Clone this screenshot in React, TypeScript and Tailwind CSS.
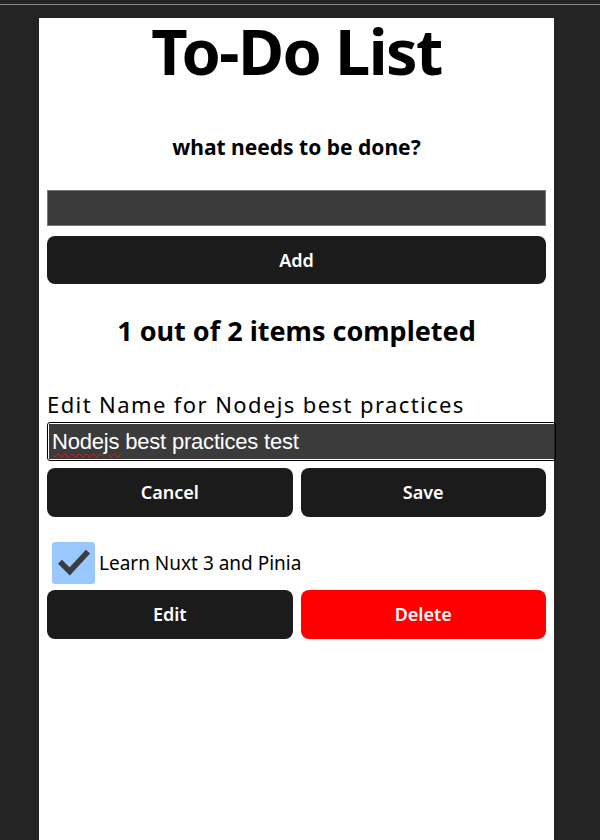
import { useState } from "react";

const font = { fontFamily: '"Noto Sans", sans-serif' };
const arial = { fontFamily: '"Liberation Sans", Arial, sans-serif' };

export default function App() {
  const [name, setName] = useState("Nodejs best practices test");

  return (
    <div className="min-h-[840px] bg-[#242424]" style={font}>
      <div className="h-[4px]" />
      <div className="h-px bg-[#8c8c8c]" />
      <div className="h-[13px]" />
      <div className="ml-[39px] w-[515px] min-h-[822px] bg-white px-2">
        <h1 className="text-center text-[63px] font-bold leading-[66px] tracking-tight text-black">
          To-Do List
        </h1>

        <h2 className="mt-[49px] text-center text-[21px] font-bold leading-[28px] text-black">
          what needs to be done?
        </h2>

        <input
          type="text"
          className="mt-[29px] block h-[36px] w-full border border-[#767676] bg-[#3b3b3b] px-1 text-white outline-none"
        />
        <button className="mt-[10px] h-[48px] w-full rounded-lg bg-[#1b1b1b] text-[18px] font-semibold text-white">
          Add
        </button>

        <h2 className="mt-[29px] text-center text-[27px] font-bold leading-[36px] text-black">
          1 out of 2 items completed
        </h2>

        <div className="mt-[41px]">
          <label className="block text-[22px] leading-[28px] tracking-[1.4px] text-black">
            Edit Name for Nodejs best practices
          </label>
          <div className="relative mt-[4px] w-[509px] rounded-[3px] border border-black p-px">
            <input
              type="text"
              value={name}
              onChange={(e) => setName(e.target.value)}
              spellCheck
              className="block h-[35px] w-full bg-[#3b3b3b] px-[3px] text-[22px] tracking-[-0.2px] text-white outline-none"
              style={arial}
            />
            {/* spell-check squiggle under the first word */}
            <span
              aria-hidden
              className="pointer-events-none absolute left-[5px] top-[2px] text-[22px] leading-[35px] tracking-[-0.2px] text-transparent underline decoration-[#e01b1b] decoration-wavy decoration-1 underline-offset-[3px]"
              style={arial}
            >
              Nodejs
            </span>
          </div>
          <div className="mt-[7px] flex gap-2">
            <button className="h-[49px] flex-1 rounded-lg bg-[#1b1b1b] text-[18px] font-semibold text-white">
              Cancel
            </button>
            <button className="h-[49px] flex-1 rounded-lg bg-[#1b1b1b] text-[18px] font-semibold text-white">
              Save
            </button>
          </div>
        </div>

        <div className="mt-[25px]">
          <div className="flex items-center gap-[4px] pl-[5px]">
            <span className="flex h-[42px] w-[43px] items-center justify-center rounded-[3px] bg-[#99c8ff]">
              <svg viewBox="0 0 24 24" className="h-[34px] w-[34px]">
                <path
                  d="M3.5 12.5 L9 18 L20.5 5.5"
                  fill="none"
                  stroke="#3b3b3b"
                  strokeWidth="4"
                  strokeLinecap="square"
                />
              </svg>
            </span>
            <span className="text-[19px] leading-[26px] text-black">Learn Nuxt 3 and Pinia</span>
          </div>
          <div className="mt-[6px] flex gap-2">
            <button className="h-[49px] flex-1 rounded-lg bg-[#1b1b1b] text-[18px] font-semibold text-white">
              Edit
            </button>
            <button className="h-[49px] flex-1 rounded-lg bg-[#ff0000] text-[18px] font-semibold text-white">
              Delete
            </button>
          </div>
        </div>
      </div>
    </div>
  );
}
